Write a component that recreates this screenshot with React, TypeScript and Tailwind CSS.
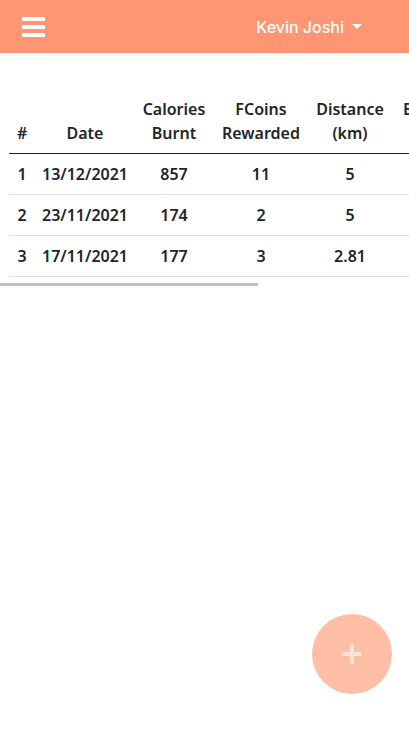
import React from "react";

const rows = [
  { n: 1, date: "13/12/2021", cal: 857, coins: 11, dist: "5", time: "45" },
  { n: 2, date: "23/11/2021", cal: 174, coins: 2, dist: "5", time: "30" },
  { n: 3, date: "17/11/2021", cal: 177, coins: 3, dist: "2.81", time: "32" },
];

const App = () => {
  return (
    <div className="min-h-[733px] bg-white relative overflow-hidden">
      <nav className="h-[53px] bg-[#ff9673] flex items-center justify-between pl-[22px] pr-[47px]">
        <div className="flex flex-col gap-[4px] w-[23px]">
          <span className="block h-[4px] bg-white" />
          <span className="block h-[4px] bg-white" />
          <span className="block h-[4px] bg-white" />
        </div>
        <button className="flex items-center text-white text-[16px] font-medium font-['Inter',sans-serif]">
          Kevin Joshi
          <span className="ml-[8px] w-0 h-0 border-l-[5px] border-r-[5px] border-t-[5px] border-l-transparent border-r-transparent border-t-white" />
        </button>
      </nav>

      <div className="mt-[36px] overflow-hidden font-['Noto_Sans',sans-serif] text-[16px] font-semibold text-[#212529]">
        <table className="ml-[9px] w-[512px] table-fixed border-collapse text-center">
          <colgroup>
            <col className="w-[26px]" />
            <col className="w-[100px]" />
            <col className="w-[78px]" />
            <col className="w-[96px]" />
            <col className="w-[82px]" />
            <col className="w-[130px]" />
          </colgroup>
          <thead>
            <tr className="border-b border-[#212529] align-bottom leading-6">
              <th className="px-[8px] py-[8px] font-semibold">#</th>
              <th className="px-[8px] py-[8px] font-semibold">Date</th>
              <th className="px-[4px] py-[8px] font-semibold">Calories Burnt</th>
              <th className="px-[4px] py-[8px] font-semibold">FCoins Rewarded</th>
              <th className="px-[4px] py-[8px] font-semibold">Distance (km)</th>
              <th className="px-[8px] py-[8px] font-semibold">Exercise Time (min)</th>
            </tr>
          </thead>
          <tbody>
            {rows.map((r) => (
              <tr key={r.n} className="border-b border-[#dee2e6] leading-6">
                <td className="px-[8px] py-[8px]">{r.n}</td>
                <td className="px-[4px] py-[8px]">{r.date}</td>
                <td className="px-[8px] py-[8px]">{r.cal}</td>
                <td className="px-[8px] py-[8px]">{r.coins}</td>
                <td className="px-[8px] py-[8px]">{r.dist}</td>
                <td className="px-[8px] py-[8px]">{r.time}</td>
              </tr>
            ))}
          </tbody>
        </table>
        <div className="mt-[6px] h-[3px] w-[258px] bg-[#c1c1c1]" />
      </div>

      <button className="absolute left-[312px] top-[614px] w-[80px] h-[80px] rounded-full bg-[#ffbea6] flex items-center justify-center">
        <svg width="22" height="22" viewBox="0 0 22 22">
          <path d="M11 3v16M3 11h16" stroke="#ffe2d8" strokeWidth="4" strokeLinecap="round" />
        </svg>
      </button>
    </div>
  );
};

export default App;
